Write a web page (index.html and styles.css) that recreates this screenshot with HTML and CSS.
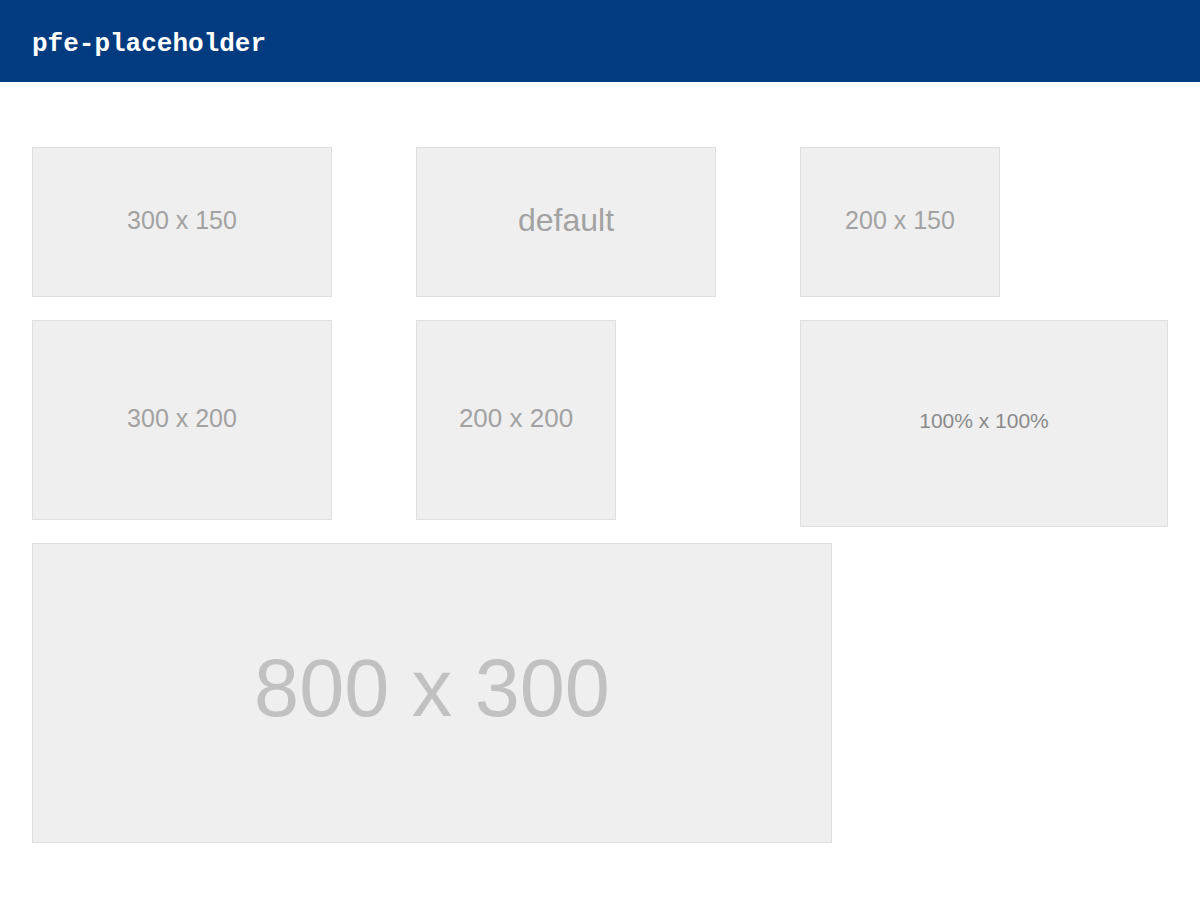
FILE: index.html
```html
<!DOCTYPE html>
<html lang="en">
<head>
    <meta charset="UTF-8">
    <meta name="viewport" content="width=device-width, initial-scale=1.0">
    <title>pfe-placeholder</title>
    <link rel="stylesheet" href="styles.css">
</head>
<body>
    <header class="topbar">
        <h1>pfe-placeholder</h1>
    </header>

    <main class="demo">
        <!-- riga 1 -->
        <div class="cell"><div class="placeholder w300 h150">300 x 150</div></div>
        <div class="cell"><div class="placeholder w300 h150 big">default</div></div>
        <div class="cell"><div class="placeholder w200 h150">200 x 150</div></div>

        <!-- riga 2 -->
        <div class="cell"><div class="placeholder w300 h200">300 x 200</div></div>
        <div class="cell"><div class="placeholder w200 h200 t26">200 x 200</div></div>
        <div class="cell fill"><div class="placeholder full">100% x 100%</div></div>

        <!-- riga 3 -->
        <div class="cell wide"><div class="placeholder w800 h300">800 x 300</div></div>
    </main>
</body>
</html>
```

FILE: styles.css
```css
* {
    margin: 0;
    padding: 0;
    box-sizing: border-box;
}

body {
    font-family: 'Liberation Sans', Arial, sans-serif;
    background: #fff;
}

.topbar {
    background: #033b80;
    height: 82px;
    padding: 0 32px;
    display: flex;
    align-items: center;
}

.topbar h1 {
    font-family: 'Liberation Mono', 'Courier New', monospace;
    font-size: 26px;
    font-weight: bold;
    color: #fff;
    padding-top: 6px;
}

.demo {
    display: grid;
    grid-template-columns: repeat(3, 1fr);
    gap: 16px;
    padding: 65px 32px 32px;
}

.cell {
    padding-bottom: 7px; /* spazio sotto come un inline-block */
}

.cell.wide {
    grid-column: 1 / 3;
}

.placeholder {
    background: #efefef;
    border: 1px solid #dfdfdf;
    color: #a2a2a2;
    font-size: 25px;
    display: flex;
    justify-content: center;
    align-items: center;
    padding-bottom: 4px;
}

.w200 { width: 200px; }
.w300 { width: 300px; }
.w800 { width: 800px; }
.h150 { height: 150px; }
.h200 { height: 200px; }
.h300 { height: 300px; }

.big {
    font-size: 32px;
}

.t26 {
    font-size: 26px;
}

.cell.fill {
    padding-bottom: 0;
}

.full {
    width: 100%;
    height: 100%;
    font-size: 21px;
    color: #8a8a8a;
    padding-bottom: 6px;
}

.w800 {
    font-size: 81px;
    color: #c1c1c1;
    padding-bottom: 10px;
}
```
